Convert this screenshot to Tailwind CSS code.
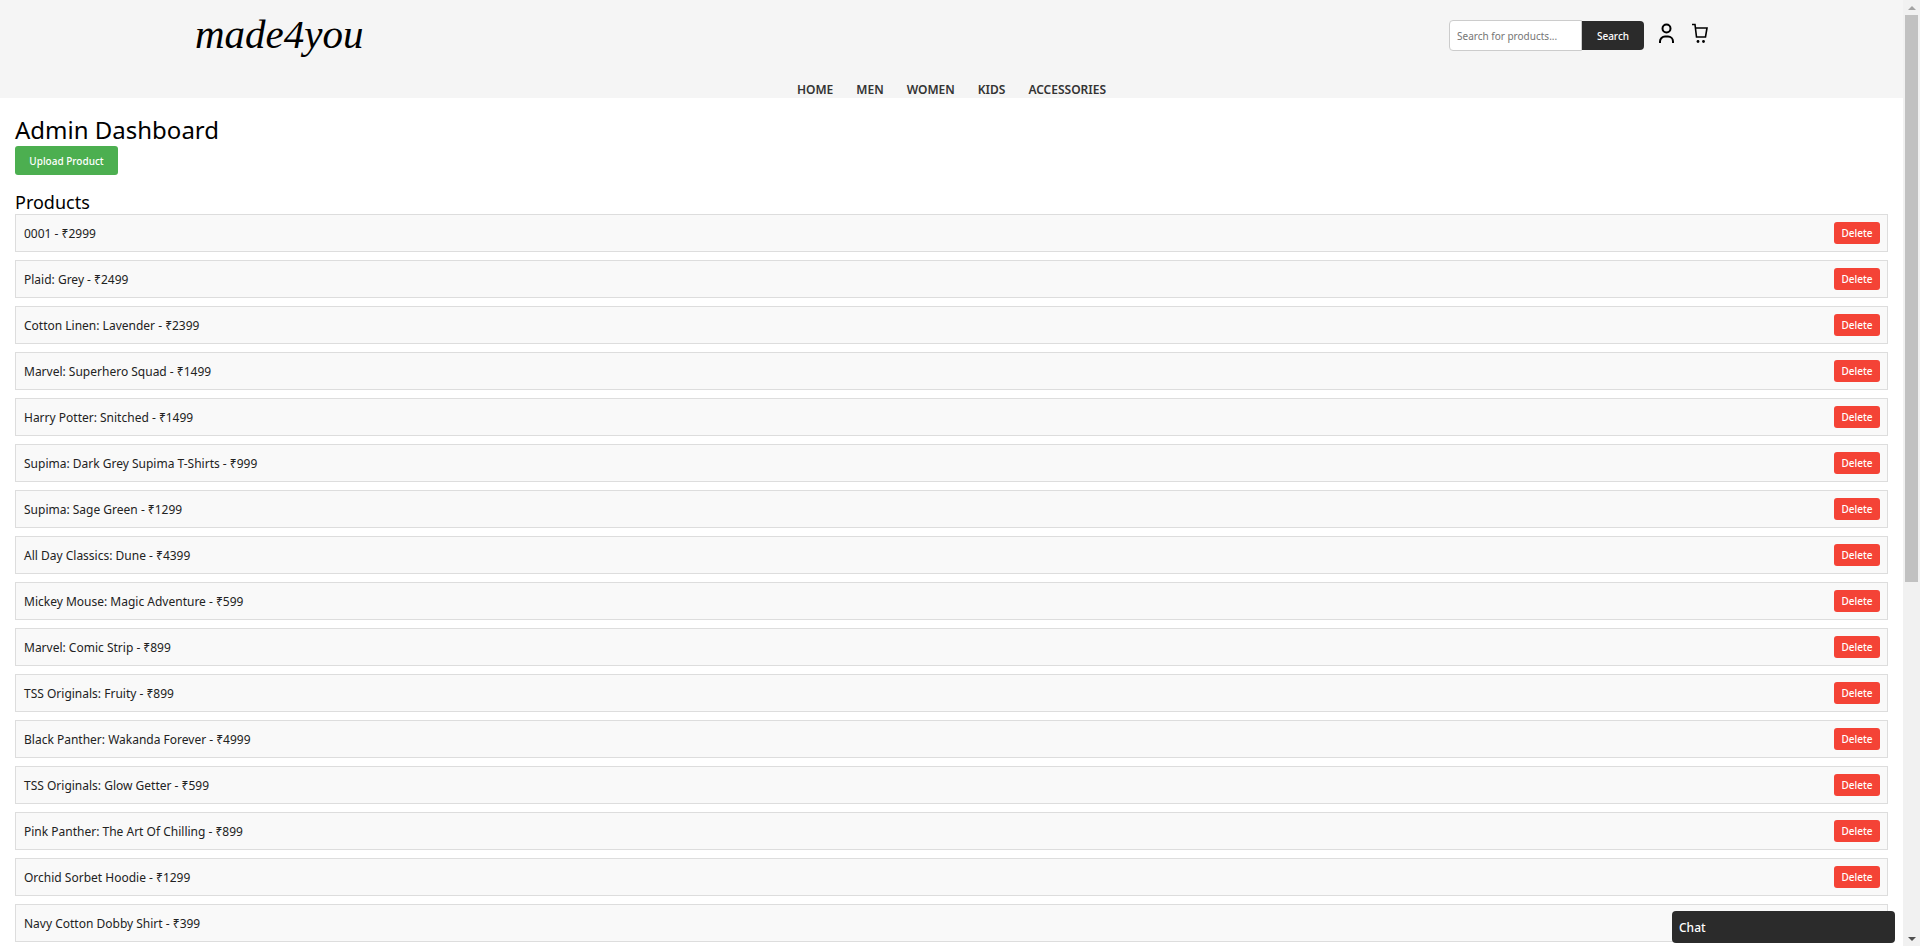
<!DOCTYPE html>
<html lang="en">
<head>
    <meta charset="UTF-8">
    <meta name="viewport" content="width=device-width, initial-scale=1.0">
    <title>Admin Dashboard</title>
    <script src="https://cdn.jsdelivr.net/npm/@tailwindcss/browser@4"></script>
</head>
<body class="bg-white h-[946px] overflow-hidden flex font-['Noto_Sans',sans-serif] text-black">
    <div class="w-[1903px] h-[946px] overflow-hidden shrink-0">
        <header class="bg-[#f5f5f5] h-[98px]">
            <div class="flex justify-between pl-[195px] pr-[195px] h-[70px]">
                <div class="pt-[9px] text-[41px] leading-[50px] italic font-['Liberation_Serif',serif] text-black">made4you</div>
                <div class="flex items-start pt-[20px]">
                    <div class="flex items-center h-[31px]">
                        <div class="w-[133px] h-[31px] bg-white border border-[#cccccc] rounded-l-[4px] pl-[7px] text-[10px] leading-[30px] text-[#757575]">Search for products...</div>
                        <button class="w-[62px] h-[29px] pt-[1px] bg-[#2b2b2b] text-white text-[10px] font-medium rounded-r-[4px]">Search</button>
                    </div>
                    <svg class="w-[17px] h-[21px] ml-[14px] mt-[3px]" viewBox="0 0 17 21" fill="none" stroke="#000" stroke-width="2">
                        <circle cx="8.5" cy="5.5" r="4"/>
                        <path d="M2 20v-1.5a5 5 0 0 1 5-5h3a5 5 0 0 1 5 5V20"/>
                    </svg>
                    <svg class="w-[17px] h-[21px] ml-[16px] mt-[3px]" viewBox="0 0 17 21" fill="none" stroke="#000" stroke-width="1.6">
                        <path d="M1 1.5h3L5.5 14h9L16 5H4.5"/>
                        <circle cx="7" cy="18.5" r="1.4" fill="#000" stroke="none"/>
                        <circle cx="12.5" cy="18.5" r="1.4" fill="#000" stroke="none"/>
                    </svg>
                </div>
            </div>
            <nav class="flex justify-center gap-[23px] text-[12px] leading-[16px] font-semibold text-[#333333] pt-[12px]">
                <a>HOME</a>
                <a>MEN</a>
                <a>WOMEN</a>
                <a>KIDS</a>
                <a>ACCESSORIES</a>
            </nav>
        </header>

        <main class="px-[15px]">
            <h1 class="text-[24px] leading-[33px] mt-[15px]">Admin Dashboard</h1>
            <button class="block w-[103px] h-[29px] pt-[1px] bg-[#4caf50] text-white text-[10px] font-medium rounded-[3px]">Upload Product</button>
            <h2 class="text-[18px] leading-[24px] mt-[15px]">Products</h2>
            <div id="products"></div>
        </main>
    </div>

    <!-- scrollbar -->
    <div class="w-[17px] h-[946px] bg-[#f1f1f1] flex flex-col items-center shrink-0">
        <div class="h-[15px] flex items-center justify-center">
            <div class="w-0 h-0 border-l-[4px] border-r-[4px] border-b-[4px] border-l-transparent border-r-transparent border-b-[#a3a3a3]"></div>
        </div>
        <div class="w-[13px] h-[567px] bg-[#c1c1c1]"></div>
        <div class="flex-1"></div>
        <div class="h-[15px] flex items-center justify-center">
            <div class="w-0 h-0 border-l-[4px] border-r-[4px] border-t-[4px] border-l-transparent border-r-transparent border-t-[#505050]"></div>
        </div>
    </div>

    <div class="fixed left-[1672px] top-[911px] w-[223px] h-[32px] bg-[#2b2b2b] rounded-[4px] text-white text-[12px] leading-[33px] pl-[7px] font-medium">Chat</div>

    <script>
        const products = [
            '0001 - ₹2999',
            'Plaid: Grey - ₹2499',
            'Cotton Linen: Lavender - ₹2399',
            'Marvel: Superhero Squad - ₹1499',
            'Harry Potter: Snitched - ₹1499',
            'Supima: Dark Grey Supima T-Shirts - ₹999',
            'Supima: Sage Green - ₹1299',
            'All Day Classics: Dune - ₹4399',
            'Mickey Mouse: Magic Adventure - ₹599',
            'Marvel: Comic Strip - ₹899',
            'TSS Originals: Fruity - ₹899',
            'Black Panther: Wakanda Forever - ₹4999',
            'TSS Originals: Glow Getter - ₹599',
            'Pink Panther: The Art Of Chilling - ₹899',
            'Orchid Sorbet Hoodie - ₹1299',
            'Navy Cotton Dobby Shirt - ₹399',
        ];

        document.getElementById('products').innerHTML = products.map(name => `
            <div class="flex items-center justify-between h-[38px] mb-[8px] pl-[8px] pr-[7px] bg-[#f9f9f9] border border-[#dddddd]">
                <span class="pt-[1px] text-[12px] text-[#222222]">${name}</span>
                <button class="w-[46px] h-[22px] pt-[1px] bg-[#f44336] text-white text-[10px] font-medium rounded-[3px]">Delete</button>
            </div>
        `).join('');
    </script>
</body>
</html>
